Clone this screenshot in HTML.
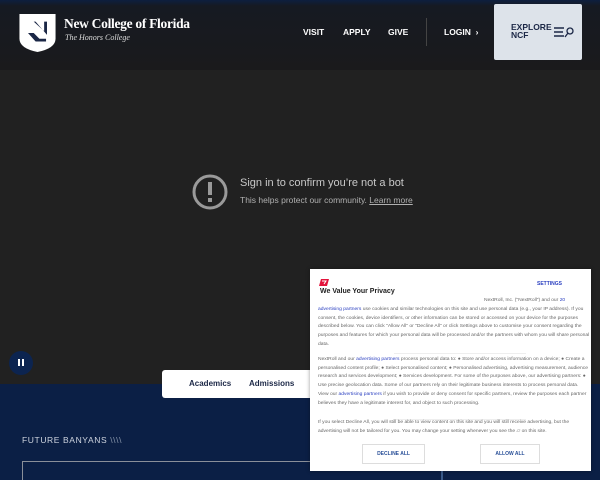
<!DOCTYPE html>
<html><head><style>
*{margin:0;padding:0;box-sizing:border-box}
html,body{width:600px;height:480px;overflow:hidden}
body{background:#212121;font-family:"Liberation Sans",sans-serif;position:relative}
.abs{position:absolute}
a{color:#2a3fc0}
</style></head><body>
<div class="abs" style="left:0;top:0;width:600px;height:70px;background:linear-gradient(#0d1f3f 0,#161a22 6px,#1a1a1c 70px)"></div>
<svg class="abs" style="left:19px;top:14px" width="37" height="38" viewBox="0 0 38 40"><path d="M0 0H38V26Q38 36 19 40Q0 36 0 26Z" fill="#fff"/><path d="M9 8h8l12 14V8h-3v10L15 8H9zM9 20l8 9h11v-3h-7l-6-6z" fill="#1b2746"/></svg>
<div class="abs" style="left:64px;top:16px;color:#fff;font-family:'Liberation Serif',serif;font-size:13.5px;font-weight:bold;letter-spacing:-0.3px">New College of Florida</div>
<div class="abs" style="left:65px;top:33px;color:#ddd;font-family:'Liberation Serif',serif;font-size:8px;font-style:italic">The Honors College</div>
<div class="abs" style="left:303px;top:27px;color:#fff;font-size:8.5px;font-weight:bold">VISIT</div>
<div class="abs" style="left:343px;top:27px;color:#fff;font-size:8.5px;font-weight:bold">APPLY</div>
<div class="abs" style="left:388px;top:27px;color:#fff;font-size:8.5px;font-weight:bold">GIVE</div>
<div class="abs" style="left:426px;top:18px;width:1px;height:28px;background:#444"></div>
<div class="abs" style="left:444px;top:27px;color:#fff;font-size:8.5px;font-weight:bold">LOGIN &nbsp;›</div>
<div class="abs" style="left:494px;top:4px;width:88px;height:56px;background:#dde3ea;border-radius:2px"></div>
<div class="abs" style="left:511px;top:23px;color:#1b2746;font-size:8.5px;font-weight:bold;line-height:8px">EXPLORE<br>NCF</div>
<svg class="abs" style="left:553px;top:26px" width="22" height="12" viewBox="0 0 22 12"><path d="M1 2h10M1 6h9M1 10h10" stroke="#1b2746" stroke-width="1.4"/><circle cx="17" cy="5" r="3" fill="none" stroke="#1b2746" stroke-width="1.3"/><path d="M15 7l-3 4" stroke="#1b2746" stroke-width="1.3"/></svg>
<svg class="abs" style="left:191px;top:173px" width="38" height="38" viewBox="0 0 38 38"><circle cx="19" cy="19" r="16" fill="none" stroke="#9a9a9a" stroke-width="3"/><rect x="17" y="9" width="4" height="13" fill="#9a9a9a"/><rect x="17" y="25" width="4" height="4" fill="#9a9a9a"/></svg>
<div class="abs" style="left:240px;top:177px;color:#c8c8c8;font-size:11px">Sign in to confirm you’re not a bot</div>
<div class="abs" style="left:240px;top:195px;color:#b0b0b0;font-size:8.5px">This helps protect our community. <u>Learn more</u></div>
<div class="abs" style="left:9px;top:351px;width:24px;height:24px;border-radius:50%;background:#0c2450"></div>
<div class="abs" style="left:18px;top:359px;width:2px;height:7px;background:#fff"></div>
<div class="abs" style="left:22px;top:359px;width:2px;height:7px;background:#fff"></div>
<div class="abs" style="left:0;top:384px;width:600px;height:96px;background:#0b1f45"></div>
<div class="abs" style="left:162px;top:370px;width:160px;height:28px;background:#fff;border-radius:3px"></div>
<div class="abs" style="left:189px;top:379px;color:#1b2746;font-size:8px;font-weight:bold">Academics</div>
<div class="abs" style="left:249px;top:379px;color:#1b2746;font-size:8px;font-weight:bold">Admissions</div>
<div class="abs" style="left:22px;top:435px;color:#cdd3de;font-size:8.5px;letter-spacing:0.6px">FUTURE BANYANS <span style="color:#8895aa">\\\\</span></div>
<div class="abs" style="left:22px;top:461px;width:420px;height:30px;border:1px solid #8a8f99"></div>
<div class="abs" style="left:441px;top:462px;width:2px;height:20px;background:#3a5a8a"></div>
<div class="abs" style="left:310px;top:269px;width:281px;height:202px;background:#fff;box-shadow:0 0 4px rgba(0,0,0,.4);font-size:4.95px;color:#666;line-height:8.7px">
 <svg class="abs" style="left:9px;top:10px" width="10" height="7" viewBox="0 0 10 7"><path d="M2 0h8L8 7H0z" fill="#e3143c"/><path d="M3 2h4L5 5" stroke="#fff" stroke-width="1" fill="none"/></svg>
 <div class="abs" style="left:227px;top:11px;color:#2a3fc0;font-weight:bold;font-size:5px">SETTINGS</div>
 <div class="abs" style="left:10px;top:19px;color:#222;font-weight:bold;font-size:7px">We Value Your Privacy</div>
 <div class="abs" style="left:174px;top:28px;white-space:nowrap">NextRoll, Inc. ("NextRoll") and our <a>20</a></div>
 <div class="abs" style="left:8px;top:37px;width:272px"><a>advertising partners</a> use cookies and similar technologies on this site and use personal data (e.g., your IP address). If you consent, the cookies, device identifiers, or other information can be stored or accessed on your device for the purposes described below. You can click "Allow All" or "Decline All" or click Settings above to customise your consent regarding the purposes and features for which your personal data will be processed and/or the partners with whom you will share personal data.</div>
 <div class="abs" style="left:84px;top:84px;width:132px;height:1px;background:#eee"></div>
 <div class="abs" style="left:8px;top:87px;width:272px">NextRoll and our <a>advertising partners</a> process personal data to: ● Store and/or access information on a device; ● Create a personalised content profile; ● Select personalised content; ● Personalised advertising, advertising measurement, audience research and services development; ● Services development. For some of the purposes above, our advertising partners: ● Use precise geolocation data. Some of our partners rely on their legitimate business interests to process personal data. View our <a>advertising partners</a> if you wish to provide or deny consent for specific partners, review the purposes each partner believes they have a legitimate interest for, and object to such processing.</div>
 <div class="abs" style="left:84px;top:150px;width:132px;height:1px;background:#eee"></div>
 <div class="abs" style="left:8px;top:150px;width:274px">If you select Decline All, you will still be able to view content on this site and you will still receive advertising, but the advertising will not be tailored for you. You may change your setting whenever you see the ▱ on this site.</div>
 <div class="abs" style="left:52px;top:175px;width:63px;height:20px;border:1px solid #ddd;color:#2a5098;font-weight:bold;font-size:5px;text-align:center;line-height:18px">DECLINE ALL</div>
 <div class="abs" style="left:170px;top:175px;width:60px;height:20px;border:1px solid #ddd;color:#2a5098;font-weight:bold;font-size:5px;text-align:center;line-height:18px">ALLOW ALL</div>
</div>
</body></html>
